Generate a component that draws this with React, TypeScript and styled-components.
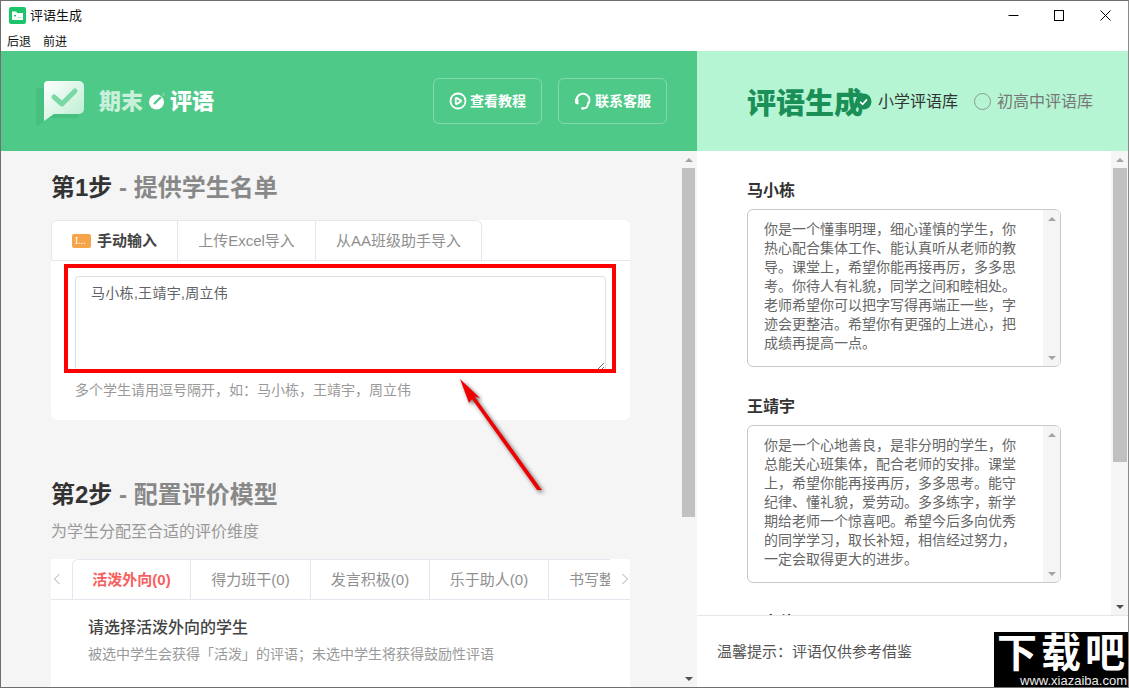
import React from "react";
import styled, { createGlobalStyle } from "styled-components";
import { CirclePlay } from "lucide-react";

const GlobalStyle = createGlobalStyle`
  html, body {
    margin: 0;
    padding: 0;
    background: #fff;
  }
  * {
    box-sizing: border-box;
  }
  body, textarea {
    font-family: "Liberation Sans", "Noto Sans CJK SC", sans-serif;
  }
`;

const Win = styled.div`
  position: relative;
  width: 1129px;
  height: 688px;
  border: 1px solid #6f6f6f;
  border-right-color: #8a8a8a;
  display: flex;
  flex-direction: column;
  overflow: hidden;
  background: #fff;
`;

const TitleBar = styled.div`
  height: 29px;
  display: flex;
  align-items: center;
  padding-left: 8px;
  flex-shrink: 0;
`;

const AppTitle = styled.span`
  font-size: 13px;
  color: #111;
  margin-left: 4px;
  padding-bottom: 3px;
  flex: 1;
`;

const WinButton = styled.div`
  width: 46px;
  height: 29px;
  display: flex;
  align-items: center;
  justify-content: center;
`;

const MenuBar = styled.div`
  height: 21px;
  display: flex;
  align-items: center;
  gap: 12px;
  padding-left: 6px;
  font-size: 12px;
  color: #111;
  flex-shrink: 0;
`;

const Header = styled.div`
  height: 100px;
  display: flex;
  flex-shrink: 0;
`;

const HeaderLeft = styled.div`
  width: 696px;
  background: #4fc988;
  display: flex;
  align-items: center;
  padding-left: 34px;
`;

const Brand = styled.div`
  display: flex;
  align-items: center;
  flex: 1;
`;

const LogoSvg = styled.svg`
  margin-top: 6px;
  margin-right: 12px;
`;

const BrandText = styled.span<{ $pale?: boolean }>`
  font-size: 22px;
  line-height: 24px;
  font-weight: 900;
  margin-top: 2px;
  color: ${(p) => (p.$pale ? "#c9f0da" : "#fff")};
`;

const DotSvg = styled.svg`
  margin: 0 4px 0 5px;
`;

const HeaderBtn = styled.div`
  width: 109px;
  height: 46px;
  margin-right: 16px;
  border: 1px solid rgba(255, 255, 255, 0.3);
  border-radius: 6px;
  display: flex;
  align-items: center;
  justify-content: center;
  gap: 3px;
  color: #fff;
  font-size: 14px;
  font-weight: 700;
  &:last-child {
    margin-right: 30px;
  }
`;

const BtnLabel = styled.span`
  padding-bottom: 2px;
`;

const HeaderRight = styled.div`
  flex: 1;
  background: #b5f5d3;
  display: flex;
  align-items: center;
  padding-left: 50px;
  position: relative;
`;

const BigTitle = styled.span`
  font-size: 29px;
  font-weight: 900;
  color: #1a8f58;
  width: 110px;
  white-space: nowrap;
`;

const RadioLabel = styled.span<{ $on?: boolean }>`
  font-size: 16px;
  color: ${(p) => (p.$on ? "#333" : "#777")};
  margin-left: ${(p) => (p.$on ? 21 : 6)}px;
  padding-bottom: 3px;
`;

const RadioOff = styled.span`
  width: 17px;
  height: 17px;
  border: 1.5px solid #8a9c92;
  border-radius: 50%;
  margin-left: 16px;
`;

const CheckedSvg = styled.svg`
  position: absolute;
  left: 158px;
  top: 42px;
`;

const Main = styled.div`
  flex: 1;
  display: flex;
  min-height: 0;
`;

const LeftPane = styled.div`
  width: 696px;
  background: #f5f5f5;
  display: flex;
`;

const LeftScroll = styled.div`
  flex: 1;
  overflow: hidden;
  padding: 20px 0 0 50px;
`;

const Heading = styled.h2<{ $gap?: number }>`
  margin: ${(p) => p.$gap ?? 0}px 0 0;
  font-size: 24px;
  line-height: 34px;
  font-weight: 700;
  color: #333;
  span {
    color: #888;
  }
`;

const SubText = styled.div`
  margin-top: 8px;
  font-size: 16px;
  line-height: 24px;
  color: #999;
`;

const Card = styled.div<{ $gap: number }>`
  width: 579px;
  margin-top: ${(p) => p.$gap}px;
  background: #fff;
  border-radius: 6px;
`;

const TabStrip = styled.div`
  height: 41px;
  display: flex;
  border-bottom: 1px solid #e4e7ed;
  overflow: hidden;
`;

const Tab = styled.div<{ $w: number; $active?: boolean; $red?: boolean }>`
  width: ${(p) => p.$w}px;
  height: ${(p) => (p.$active ? 41 : 40)}px;
  flex-shrink: 0;
  display: flex;
  align-items: center;
  justify-content: center;
  gap: 6px;
  padding-bottom: ${(p) => (p.$active ? 3 : 2)}px;
  background: #fff;
  font-size: 15px;
  white-space: nowrap;
  overflow: hidden;
  border-top: 1px solid #e4e7ed;
  border-right: 1px solid #e4e7ed;
  font-weight: ${(p) => (p.$active ? 700 : 400)};
  color: ${(p) => (p.$red ? "#f95e5e" : p.$active ? "#444" : "#8f8f8f")};
  &:first-child {
    border-left: 1px solid #e4e7ed;
    border-top-left-radius: 6px;
  }
  &:last-child {
    border-top-right-radius: 6px;
  }
`;

const ClippedTab = styled(Tab)`
  justify-content: flex-start;
  padding-left: 20px;
  border-right: none;
`;

const TabArrow = styled.div<{ $w: number; $pad: number }>`
  width: ${(p) => p.$w}px;
  flex-shrink: 0;
  height: 40px;
  display: flex;
  align-items: center;
  padding-left: ${(p) => p.$pad}px;
  background: #fff;
`;

const LeadTab = styled(Tab)`
  border-left: 1px solid #e4e7ed;
  border-top-left-radius: 6px;
`;

const Badge = styled.span`
  width: 19px;
  height: 14px;
  margin-top: 2px;
  border-radius: 2px;
  background: #f5a44a;
  color: #fff;
  font-family: "Liberation Serif", serif;
  font-size: 10px;
  line-height: 14px;
  padding-left: 3px;
  font-weight: 400;
`;

const CardBody = styled.div`
  padding: 15px 24px 20px;
`;

const NameInput = styled.textarea`
  display: block;
  width: 531px;
  height: 96px;
  padding: 6px 15px;
  border: 1px solid #dcdfe6;
  border-radius: 4px;
  font-size: 14px;
  line-height: 20px;
  letter-spacing: 0.3px;
  color: #606266;
  outline: none;
  resize: both;
  overflow: hidden;
`;

const Hint = styled.div`
  margin-top: 8px;
  font-size: 14px;
  line-height: 20px;
  color: #999;
`;

const ModelBody = styled.div`
  height: 120px;
  padding: 16px 0 0 37px;
`;

const ModelTitle = styled.div`
  font-size: 16px;
  line-height: 24px;
  font-weight: 500;
  color: #444;
`;

const ModelDesc = styled.div`
  margin-top: 4px;
  font-size: 14px;
  line-height: 20px;
  color: #999;
`;

const Bar = styled.div<{ $w: number }>`
  width: ${(p) => p.$w}px;
  flex-shrink: 0;
  display: flex;
  flex-direction: column;
  align-items: center;
  background: #f5f5f5;
`;

const BarEnd = styled.div`
  height: 17px;
  display: flex;
  align-items: center;
  justify-content: center;
  flex-shrink: 0;
`;

const BarSpace = styled.div`
  flex: 1;
`;

const BarThumb = styled.div<{ $w: number; $h: number }>`
  width: ${(p) => p.$w}px;
  height: ${(p) => p.$h}px;
  background: #c1c1c1;
  flex-shrink: 0;
`;

const Caret = styled.span<{ $down?: boolean; $dark?: boolean }>`
  width: 0;
  height: 0;
  border-left: 4px solid transparent;
  border-right: 4px solid transparent;
  border-${(p) => (p.$down ? "top" : "bottom")}: 4px solid ${(p) => (p.$dark ? "#505050" : "#a3a3a3")};
`;

const RightPane = styled.div`
  flex: 1;
  display: flex;
  flex-direction: column;
  min-height: 0;
  background: #fff;
`;

const RightTop = styled.div`
  height: 464px;
  display: flex;
  flex-shrink: 0;
`;

const RightScroll = styled.div`
  flex: 1;
  overflow: hidden;
  padding-top: 29px;
  padding-left: 50px;
`;

const StudentName = styled.div`
  font-size: 16px;
  line-height: 22px;
  font-weight: 700;
  color: #333;
`;

const CommentBox = styled.div`
  width: 314px;
  height: 158px;
  margin: 7px 0 29px;
  border: 1px solid #c9c9c9;
  border-radius: 6px;
  display: flex;
  overflow: hidden;
`;

const CommentText = styled.div`
  flex: 1;
  padding: 10px 0 0 16px;
  font-size: 14px;
  line-height: 19px;
  color: #666;
  p {
    margin: 0;
    width: 254px;
  }
`;

const Footer = styled.div`
  flex: 1;
  border-top: 1px solid #e6e6e6;
  display: flex;
  align-items: center;
  padding: 0 0 2px 20px;
  font-size: 15px;
  color: #555;
`;

const RedFrame = styled.div`
  position: absolute;
  left: 63px;
  top: 263px;
  width: 552px;
  height: 109px;
  border: 4px solid #ff0000;
`;

const ArrowLayer = styled.svg`
  position: absolute;
  left: 439px;
  top: 359px;
  filter: drop-shadow(2px 2px 2px rgba(0, 0, 0, 0.6));
`;

const Watermark = styled.div`
  position: absolute;
  right: 0;
  bottom: -1px;
  width: 134px;
  height: 56px;
  background: #000;
  color: #fff;
  overflow: hidden;
`;

const MarkTitle = styled.div`
  font-size: 40px;
  line-height: 42px;
  font-weight: 700;
  letter-spacing: 4px;
  white-space: nowrap;
  padding-left: 3px;
`;

const MarkUrl = styled.div`
  font-size: 13px;
  line-height: 14px;
  text-align: right;
  padding-right: 1px;
  color: #eee;
`;

const AppIcon = () => (
  <svg width="17" height="17" viewBox="0 0 17 17">
    <rect width="17" height="17" rx="2" fill="#1cc46b" />
    <path d="M3 4.5h4l1.2 1.4H14v7.1H3z" fill="#fff" />
    <rect x="5" y="8" width="2" height="1.4" fill="#1cc46b" />
    <rect x="9" y="10" width="2.5" height="1" fill="#9be4bd" />
  </svg>
);

const LogoMark = () => (
  <LogoSvg width="52" height="50" viewBox="0 0 52 50">
    <defs>
      <linearGradient id="bubble" x1="0" y1="0" x2="1" y2="1">
        <stop offset="0" stopColor="#ffffff" />
        <stop offset="1" stopColor="#b9edd0" />
      </linearGradient>
    </defs>
    <path d="M4 9h34a6 6 0 0 1 6 6v20a4 4 0 0 1-4 4H12l-8 8a2 2 0 0 1-3-2V12a3 3 0 0 1 3-3z" fill="#45c07e" />
    <path d="M13 2h31a5 5 0 0 1 5 5v23a5 5 0 0 1-5 5H19l-10 7V6a4 4 0 0 1 4-4z" fill="url(#bubble)" />
    <path d="M19 18l8 7 13-13" fill="none" stroke="#7ad8a5" strokeWidth="5" strokeLinecap="round" strokeLinejoin="round" />
  </LogoSvg>
);

const LogoDot = () => (
  <DotSvg width="18" height="18" viewBox="0 0 18 18">
    <circle cx="8.5" cy="10" r="7.5" fill="#fff" />
    <path d="M6 12l7-7" stroke="#4fc988" strokeWidth="2.4" />
    <circle cx="15.5" cy="2.5" r="1" fill="none" stroke="#a9e8c6" strokeWidth=".6" />
  </DotSvg>
);

const HeadsetIcon = () => (
  <svg width="18" height="20" viewBox="0 0 18 20" fill="none">
    <path d="M3.6 12.5A6.4 6.4 0 1 1 14.4 12.5" stroke="#fff" strokeWidth="2" strokeLinecap="round" />
    <rect x="1" y="7" width="3.4" height="6" rx="1.7" fill="#fff" />
    <path d="M14 12c0 3.6-1.8 5.4-4.6 5.4" stroke="#fff" strokeWidth="1.8" strokeLinecap="round" />
    <circle cx="8.6" cy="17.4" r="1.4" fill="#fff" />
  </svg>
);

const CheckedRadio = () => (
  <CheckedSvg width="17" height="17" viewBox="0 0 17 17">
    <circle cx="8.5" cy="8.5" r="8" fill="#1a8f58" />
    <path d="M5 8.8l2.6 2.6L12 6.4" fill="none" stroke="#fff" strokeWidth="1.6" />
  </CheckedSvg>
);

const comments = [
  {
    name: "马小栋",
    text: "你是一个懂事明理，细心谨慎的学生，你热心配合集体工作、能认真听从老师的教导。课堂上，希望你能再接再厉，多多思考。你待人有礼貌，同学之间和睦相处。老师希望你可以把字写得再端正一些，字迹会更整洁。希望你有更强的上进心，把成绩再提高一点。",
  },
  {
    name: "王靖宇",
    text: "你是一个心地善良，是非分明的学生，你总能关心班集体，配合老师的安排。课堂上，希望你能再接再厉，多多思考。能守纪律、懂礼貌，爱劳动。多多练字，新学期给老师一个惊喜吧。希望今后多向优秀的同学学习，取长补短，相信经过努力，一定会取得更大的进步。",
  },
  { name: "周立伟", text: "" },
];

const ScrollBar = ({ w, thumbW, thumbH, soft }: { w: number; thumbW: number; thumbH: number; soft?: boolean }) => (
  <Bar $w={w}>
    <BarEnd>
      <Caret />
    </BarEnd>
    <BarThumb $w={thumbW} $h={thumbH} />
    <BarSpace />
    <BarEnd>
      <Caret $down $dark={!soft} />
    </BarEnd>
  </Bar>
);

export default function App() {
  return (
    <>
      <GlobalStyle />
      <Win>
        <TitleBar>
          <AppIcon />
          <AppTitle>评语生成</AppTitle>
          <WinButton>
            <svg width="11" height="11" viewBox="0 0 11 11">
              <path d="M0.5 5.5h10" stroke="#000" />
            </svg>
          </WinButton>
          <WinButton>
            <svg width="11" height="11" viewBox="0 0 11 11">
              <rect x="0.5" y="0.5" width="9" height="10" fill="none" stroke="#000" />
            </svg>
          </WinButton>
          <WinButton>
            <svg width="11" height="11" viewBox="0 0 11 11">
              <path d="M0.5 0.5l10 10M10.5 0.5l-10 10" stroke="#000" />
            </svg>
          </WinButton>
        </TitleBar>
        <MenuBar>
          <span>后退</span>
          <span>前进</span>
        </MenuBar>

        <Header>
          <HeaderLeft>
            <Brand>
              <LogoMark />
              <BrandText $pale>期末</BrandText>
              <LogoDot />
              <BrandText>评语</BrandText>
            </Brand>
            <HeaderBtn>
              <CirclePlay size={18} strokeWidth={2.4} />
              <BtnLabel>查看教程</BtnLabel>
            </HeaderBtn>
            <HeaderBtn>
              <HeadsetIcon />
              <BtnLabel>联系客服</BtnLabel>
            </HeaderBtn>
          </HeaderLeft>
          <HeaderRight>
            <BigTitle>评语生成</BigTitle>
            <CheckedRadio />
            <RadioLabel $on>小学评语库</RadioLabel>
            <RadioOff />
            <RadioLabel>初高中评语库</RadioLabel>
          </HeaderRight>
        </Header>

        <Main>
          <LeftPane>
            <LeftScroll>
              <Heading>
                第1步 <span>- 提供学生名单</span>
              </Heading>
              <Card $gap={15}>
                <TabStrip>
                  <Tab $w={127} $active>
                    <Badge>I...</Badge>
                    手动输入
                  </Tab>
                  <Tab $w={138}>上传Excel导入</Tab>
                  <Tab $w={166}>从AA班级助手导入</Tab>
                </TabStrip>
                <CardBody>
                  <NameInput defaultValue="马小栋,王靖宇,周立伟" />
                  <Hint>多个学生请用逗号隔开，如：马小栋，王靖宇，周立伟</Hint>
                </CardBody>
              </Card>

              <Heading $gap={58}>
                第2步 <span>- 配置评价模型</span>
              </Heading>
              <SubText>为学生分配至合适的评价维度</SubText>
              <Card $gap={15}>
                <TabStrip>
                  <TabArrow $w={21} $pad={2}>
                    <svg width="8" height="12" viewBox="0 0 8 12" fill="none">
                      <path d="M6.5 1L1.5 6l5 5" stroke="#aaa" />
                    </svg>
                  </TabArrow>
                  <LeadTab $w={119} $active $red>活泼外向(0)</LeadTab>
                  <Tab $w={120}>得力班干(0)</Tab>
                  <Tab $w={119}>发言积极(0)</Tab>
                  <Tab $w={119}>乐于助人(0)</Tab>
                  <ClippedTab $w={61}>书写整洁(0)</ClippedTab>
                  <TabArrow $w={20} $pad={11}>
                    <svg width="8" height="12" viewBox="0 0 8 12" fill="none">
                      <path d="M1.5 1l5 5-5 5" stroke="#aaa" />
                    </svg>
                  </TabArrow>
                </TabStrip>
                <ModelBody>
                  <ModelTitle>请选择活泼外向的学生</ModelTitle>
                  <ModelDesc>被选中学生会获得「活泼」的评语；未选中学生将获得鼓励性评语</ModelDesc>
                </ModelBody>
              </Card>
            </LeftScroll>
            <ScrollBar w={17} thumbW={13} thumbH={349} />
          </LeftPane>

          <RightPane>
            <RightTop>
              <RightScroll>
                {comments.map((c) => (
                  <div key={c.name}>
                    <StudentName>{c.name}</StudentName>
                    <CommentBox>
                      <CommentText>
                        <p>{c.text}</p>
                      </CommentText>
                      <ScrollBar w={17} thumbW={0} thumbH={0} soft />
                    </CommentBox>
                  </div>
                ))}
              </RightScroll>
              <ScrollBar w={17} thumbW={14} thumbH={294} />
            </RightTop>
            <Footer>温馨提示：评语仅供参考借鉴</Footer>
          </RightPane>
        </Main>

        <RedFrame />
        <ArrowLayer width="110" height="130" viewBox="439 359 110 130">
          <path d="M459 378L479 397L473.5 395.5L543 492L540 494.5L471 398L468 402Z" fill="#f00000" />
        </ArrowLayer>

        <Watermark>
          <MarkTitle>下载吧</MarkTitle>
          <MarkUrl>www.xiazaiba.com</MarkUrl>
        </Watermark>
      </Win>
    </>
  );
}
